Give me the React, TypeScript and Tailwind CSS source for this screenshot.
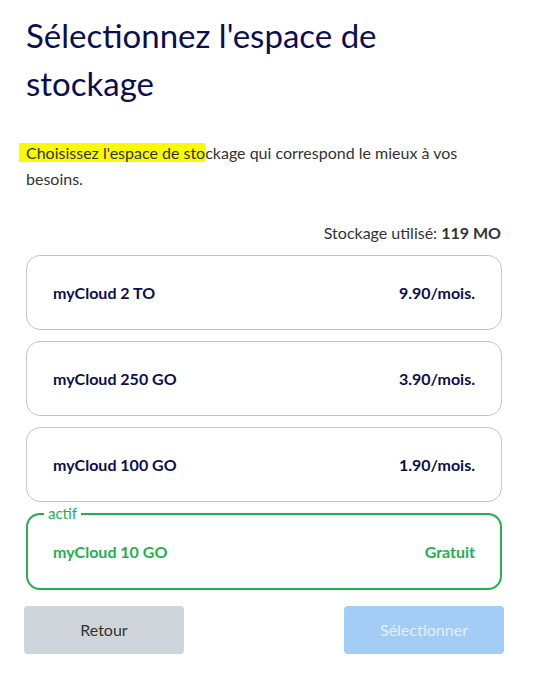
import React from 'react';

const plans = [
  { name: 'myCloud 2 TO', price: '9.90/mois.' },
  { name: 'myCloud 250 GO', price: '3.90/mois.' },
  { name: 'myCloud 100 GO', price: '1.90/mois.' },
];

export default function App() {
  return (
    <div className="w-[554px] min-h-[674px] bg-white pt-[11px]" style={{ fontFamily: 'Lato, "Noto Sans", sans-serif' }}>
      <div className="ml-[26px] w-[476px]">
        <h1 className="text-[33px] leading-[48px] text-[#0b0e4f] font-normal pr-[100px]">
          Sélectionnez l'espace de stockage
        </h1>
        <p className="mt-[33px] text-[16px] leading-[26px] text-[#333]">
          <span className="bg-[#fbfb00] -ml-[7px] pl-[7px]">Choisissez l'espace de sto</span>ckage qui correspond le mieux à vos besoins.
        </p>
        <div className="mt-[29px] text-right text-[16px] leading-[24px] text-[#333] pr-[1px]">
          Stockage utilisé: <span className="font-bold">119 MO</span>
        </div>
        <div className="mt-[10px] flex flex-col gap-[11px]">
          {plans.map((p) => (
            <div key={p.name} className="h-[75px] rounded-[14px] border border-[#c4c4c4] flex items-center justify-between px-[26px] text-[16px] font-bold text-[#0b0e4f]">
              <span>{p.name}</span>
              <span>{p.price}</span>
            </div>
          ))}
          <div className="relative h-[77px] rounded-[14px] border-2 border-[#22b04f] flex items-center justify-between px-[25px] text-[16px] font-bold text-[#22b04f]">
            <span className="absolute left-[16px] -top-[11px] bg-white px-[4px] text-[15px] font-normal leading-[18px]">actif</span>
            <span>myCloud 10 GO</span>
            <span>Gratuit</span>
          </div>
        </div>
        <div className="mt-[16px] -mx-[2px] flex justify-between">
          <button className="w-[160px] h-[48px] rounded-[4px] bg-[#d0d5da] text-[#333] text-[16px]">Retour</button>
          <button className="w-[160px] h-[48px] rounded-[4px] bg-[#a3cdf5] text-[#e3effb] text-[16px]">Sélectionner</button>
        </div>
      </div>
    </div>
  );
}
